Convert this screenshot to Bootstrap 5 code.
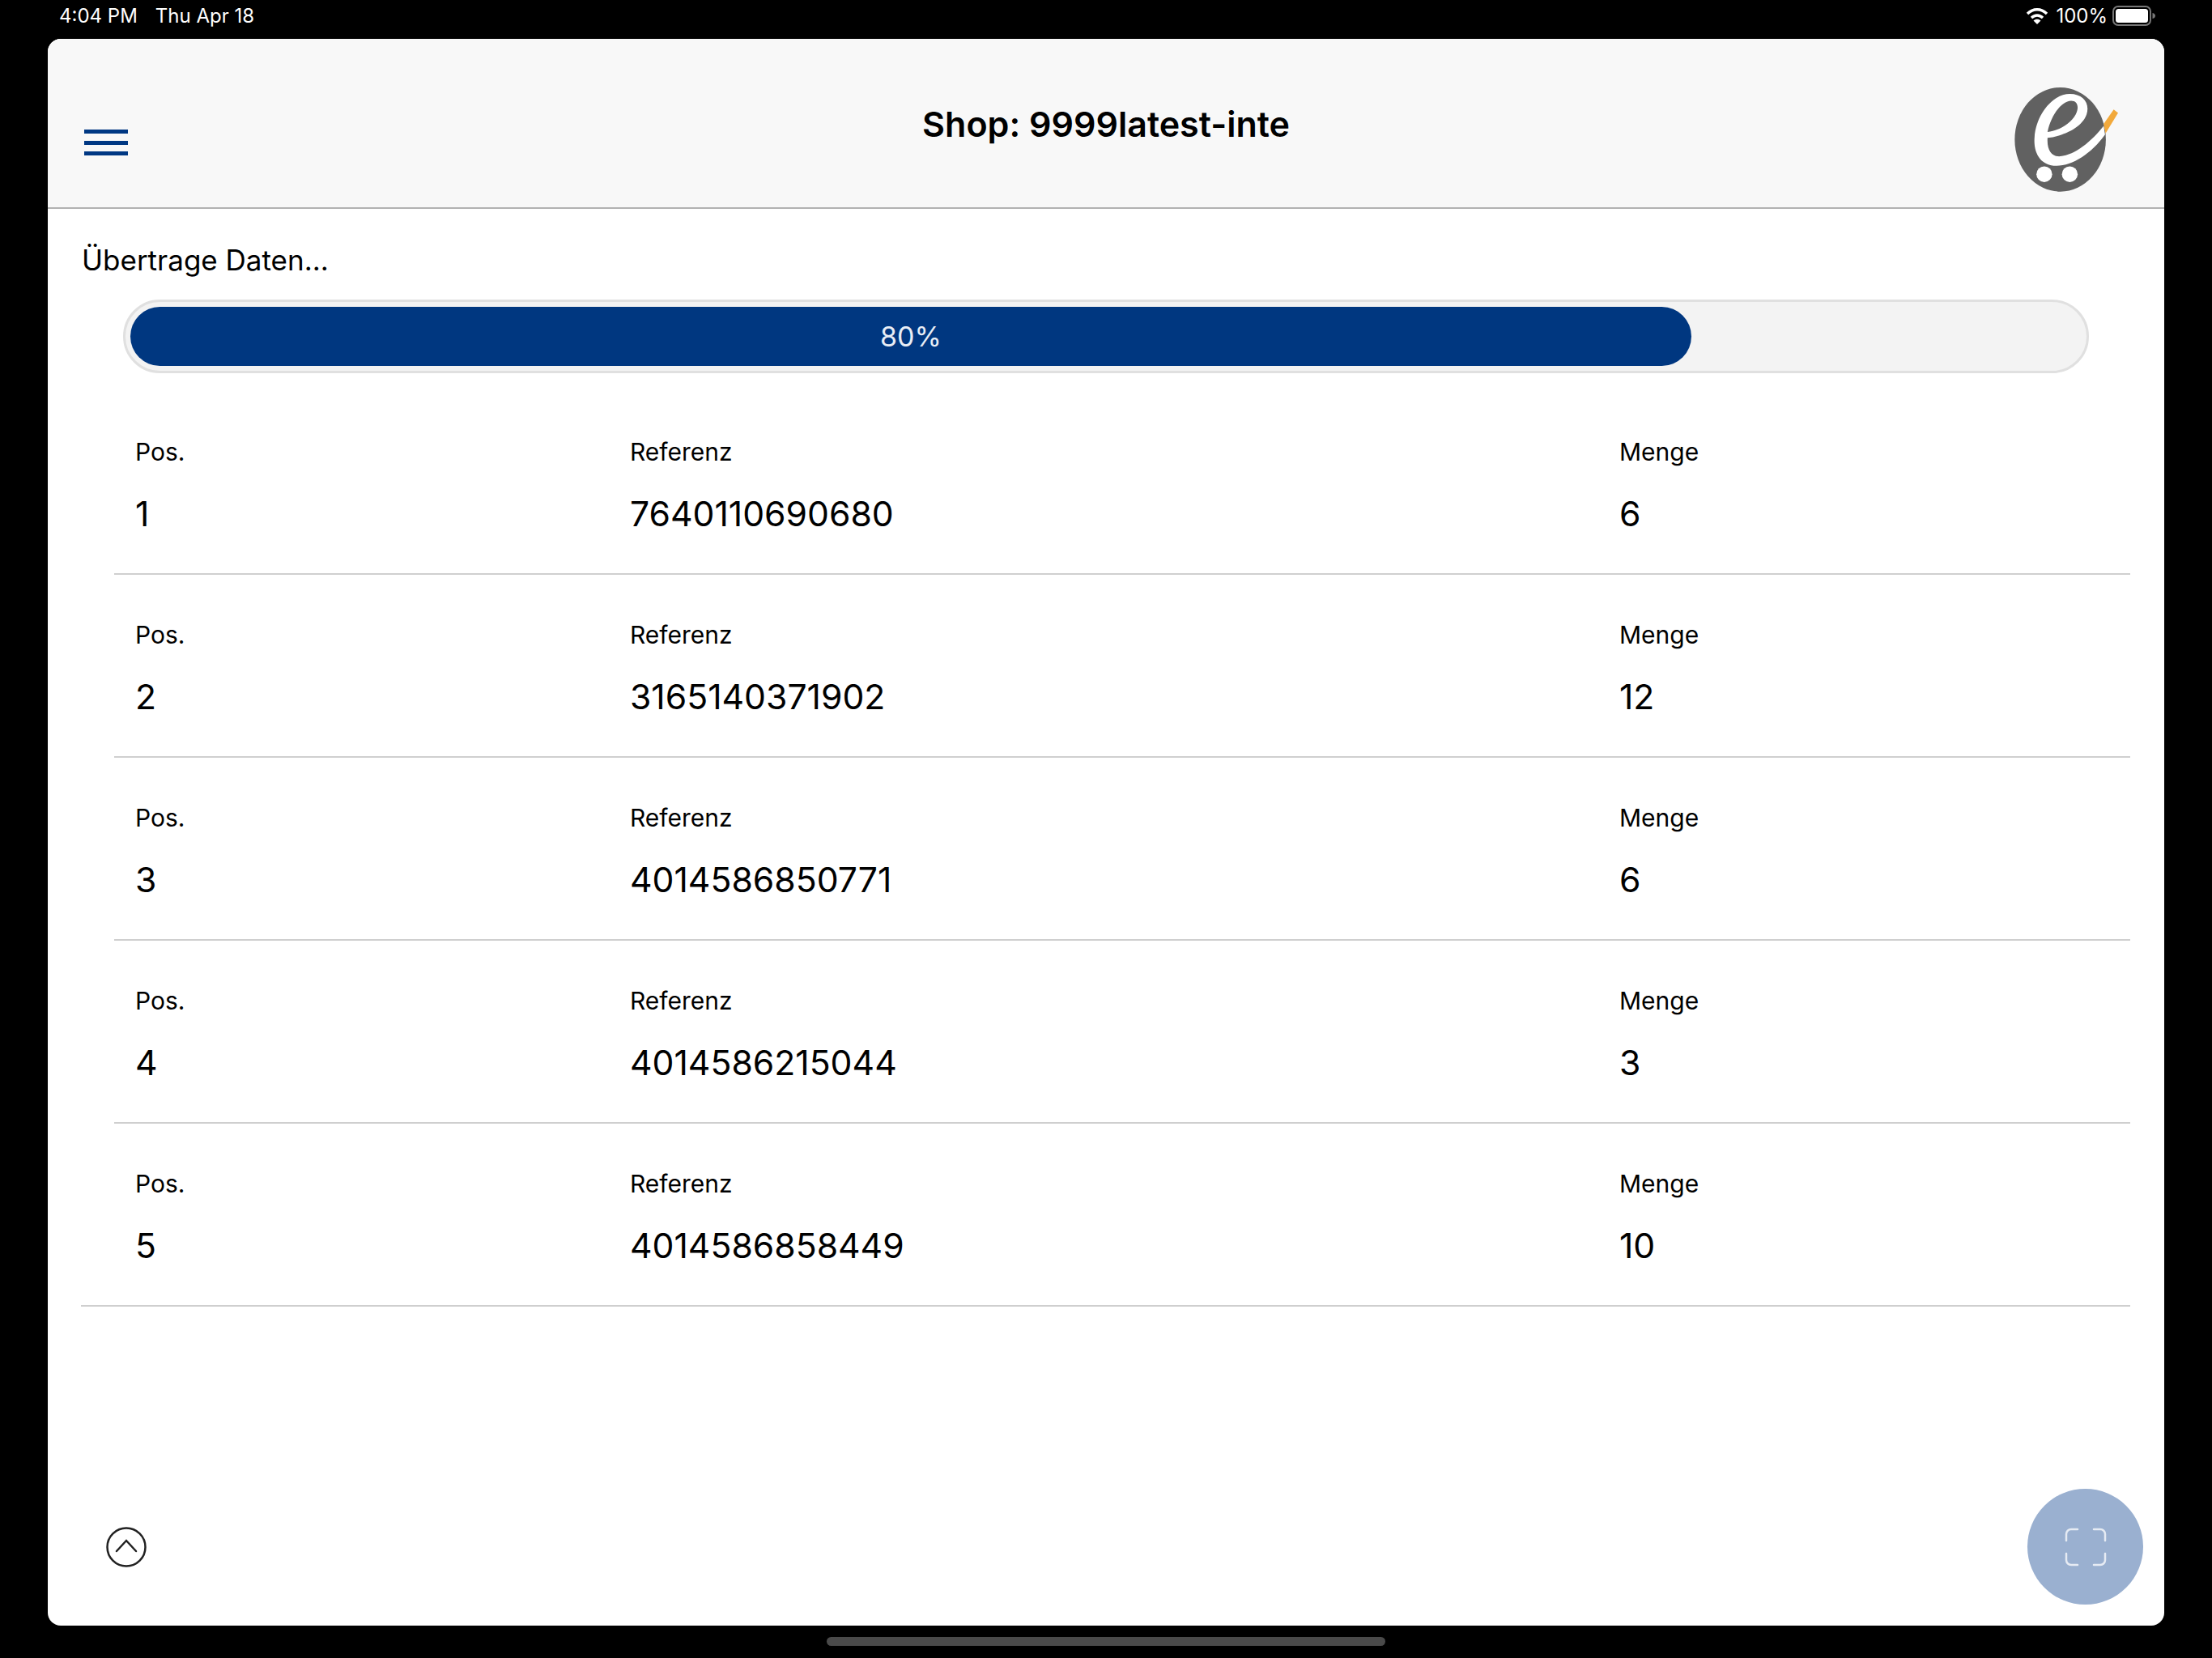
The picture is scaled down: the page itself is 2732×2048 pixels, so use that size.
<!DOCTYPE html>
<html lang="de">
<head>
    <meta charset="UTF-8" />
    <meta name="viewport" content="width=device-width, initial-scale=1.0" />
    <title>Shop: 9999latest-inte</title>
    <link href="https://cdn.jsdelivr.net/npm/bootstrap@5.3.3/dist/css/bootstrap.min.css" rel="stylesheet" />
    <style>
        html, body {
            height: 2048px;
            overflow: hidden;
        }

        body {
            font-family: Inter, "Liberation Sans", sans-serif;
            background-color: #000;
            color: #000;
        }

        .status-line {
            height: 48px;
            padding: 0 69px 8px 73px;
            color: #fff;
            font-size: 24px;
        }

        .status-left {
            gap: 22px;
        }

        .status-right {
            gap: 9px;
        }

        .battery-icon {
            margin-left: -3px;
        }

        .app-window {
            width: 2614px;
            height: 1960px;
            margin-left: 59px;
            background-color: #fff;
            border-radius: 16px;
            overflow: hidden;
        }

        .app-header {
            height: 210px;
            background-color: #f8f8f8;
            border-bottom: 2px solid #b2b2b2;
            padding: 0 53px 0 45px;
        }

        .head-side {
            flex: 1 1 0;
        }

        .menu-lines {
            width: 54px;
            margin-top: 57px;
        }

        .menu-lines span {
            display: block;
            height: 5px;
            margin-bottom: 8.5px;
            background-color: #003883;
        }

        .shop-title {
            font-size: 43px;
            font-weight: 600;
            margin: 4px 0 0 8px;
        }

        .shop-logo {
            margin-top: 42px;
        }

        .transfer-label {
            font-size: 35px;
            line-height: 44px;
            padding: 41px 0 0 42px;
        }

        .track-wrap {
            padding: 0 93px 0 93px;
            margin-top: 27px;
        }

        .track {
            height: 91px;
            padding: 6px;
            background-color: #f3f3f3;
            border: 3px solid #e0e0e0;
        }

        .track .progress-bar {
            background-color: #003780;
            font-size: 34px;
            color: #e8edf5;
        }

        .pos-list {
            margin-top: 23px;
        }

        .pos-item {
            height: 226px;
            margin-left: 82px;
            margin-right: 42px;
            border-bottom: 2px solid #cfcfcf;
            padding-top: 54px;
        }

        .pos-item:last-child {
            margin-left: 41px;
            padding-left: 41px;
        }

        .pos-grid {
            width: 2444px;
            margin: 0;
        }

        .pos-grid > div {
            padding-left: 26px;
            padding-right: 26px;
        }

        .cell-label {
            font-size: 30px;
            line-height: 40px;
        }

        .cell-value {
            font-size: 42.7px;
            line-height: 54px;
            margin-top: 30px;
        }

        .app-foot {
            padding: 0 26px 26px 72px;
            margin-top: auto;
        }

        .scan-btn {
            width: 143px;
            height: 143px;
            background-color: #9ab0d0;
        }

        .home-bar {
            width: 690px;
            height: 11px;
            margin: 14px auto 0;
            background-color: #4a4a4a;
        }
    </style>
</head>
<body>

<div class="status-line d-flex align-items-center justify-content-between">
    <div class="status-left d-flex"><span>4:04 PM</span><span>Thu Apr 18</span></div>
    <div class="status-right d-flex align-items-center">
        <svg width="28" height="22" viewBox="0 0 28 22">
            <path d="M2 8 C9 1 19 1 26 8" fill="none" stroke="#fff" stroke-width="3.4" />
            <path d="M7 13 C11 9 17 9 21 13" fill="none" stroke="#fff" stroke-width="3.4" />
            <path d="M14 21 L9.5 16.5 C12 14.3 16 14.3 18.5 16.5 Z" fill="#fff" />
        </svg>
        <span>100%</span>
        <svg class="battery-icon" width="54" height="26" viewBox="0 0 54 26">
            <rect x="1" y="1" width="46" height="23" rx="6" fill="none" stroke="#777" stroke-width="2" />
            <rect x="4" y="4" width="40" height="17" rx="3.5" fill="#fff" />
            <path d="M49.5 9 C52 9.5 53 11 53 12.5 C53 14 52 15.5 49.5 16 Z" fill="#777" />
        </svg>
    </div>
</div>

<div class="app-window d-flex flex-column">
    <div class="app-header d-flex align-items-center">
        <div class="head-side d-flex">
            <div class="menu-lines"><span></span><span></span><span></span></div>
        </div>
        <h1 class="shop-title">Shop: 9999latest-inte</h1>
        <div class="head-side d-flex justify-content-end">
            <svg class="shop-logo" width="134" height="134" viewBox="440 320 400 400">
                <ellipse cx="615" cy="518" rx="168" ry="192" fill="#616161" />
                <path d="M775 460 L812 407 L828 420 L782 495 Z" fill="#f2a93b" />
                <path fill="#fff" fill-rule="evenodd" d="M780 500 C730 570 660 615 600 615 C545 615 515 570 520 510 C525 430 585 350 650 350 C700 350 725 385 712 425 C695 475 625 505 568 512 C565 560 585 582 615 580 C670 575 730 525 775 468 Z M568 490 C580 430 620 375 655 375 C680 375 685 400 672 425 C650 465 605 485 568 490 Z" />
                <circle cx="556" cy="646" r="29" fill="#fff" />
                <circle cx="650" cy="646" r="29" fill="#fff" />
            </svg>
        </div>
    </div>

    <div class="transfer-label">Übertrage Daten...</div>
    <div class="track-wrap">
        <div class="progress track rounded-pill">
            <div class="progress-bar rounded-pill" style="width: 80%">80%</div>
        </div>
    </div>

    <div class="pos-list" id="posList"></div>

    <div class="app-foot d-flex align-items-center justify-content-between">
        <svg width="50" height="50" viewBox="0 0 50 50">
            <circle cx="25" cy="25" r="23.5" fill="none" stroke="#222" stroke-width="2.5" />
            <path d="M13 30 L25 17 L37 30" fill="none" stroke="#222" stroke-width="2.5" stroke-linecap="round" />
        </svg>
        <div class="scan-btn rounded-circle d-flex align-items-center justify-content-center">
            <svg width="52" height="48" viewBox="0 0 52 48" fill="none" stroke="#e6ebf3" stroke-width="2.5" stroke-linecap="round">
                <path d="M2 16 V8 A6 6 0 0 1 8 2 H16" />
                <path d="M36 2 H44 A6 6 0 0 1 50 8 V16" />
                <path d="M2 32 V40 A6 6 0 0 0 8 46 H16" />
                <path d="M36 46 H44 A6 6 0 0 0 50 40 V32" />
            </svg>
        </div>
    </div>
</div>

<div class="home-bar rounded-pill"></div>

<script>
    const positionen = [
        ["1", "7640110690680", "6"],
        ["2", "3165140371902", "12"],
        ["3", "4014586850771", "6"],
        ["4", "4014586215044", "3"],
        ["5", "4014586858449", "10"]
    ];

    const list = document.getElementById("posList");
    positionen.forEach(function (p) {
        list.insertAdjacentHTML("beforeend",
            '<div class="pos-item"><div class="row pos-grid">' +
            '<div class="col-3"><div class="cell-label">Pos.</div><div class="cell-value">' + p[0] + '</div></div>' +
            '<div class="col-6"><div class="cell-label">Referenz</div><div class="cell-value">' + p[1] + '</div></div>' +
            '<div class="col-3"><div class="cell-label">Menge</div><div class="cell-value">' + p[2] + '</div></div>' +
            '</div></div>');
    });
</script>

<script src="https://cdn.jsdelivr.net/npm/bootstrap@5.3.3/dist/js/bootstrap.bundle.min.js"></script>
</body>
</html>
